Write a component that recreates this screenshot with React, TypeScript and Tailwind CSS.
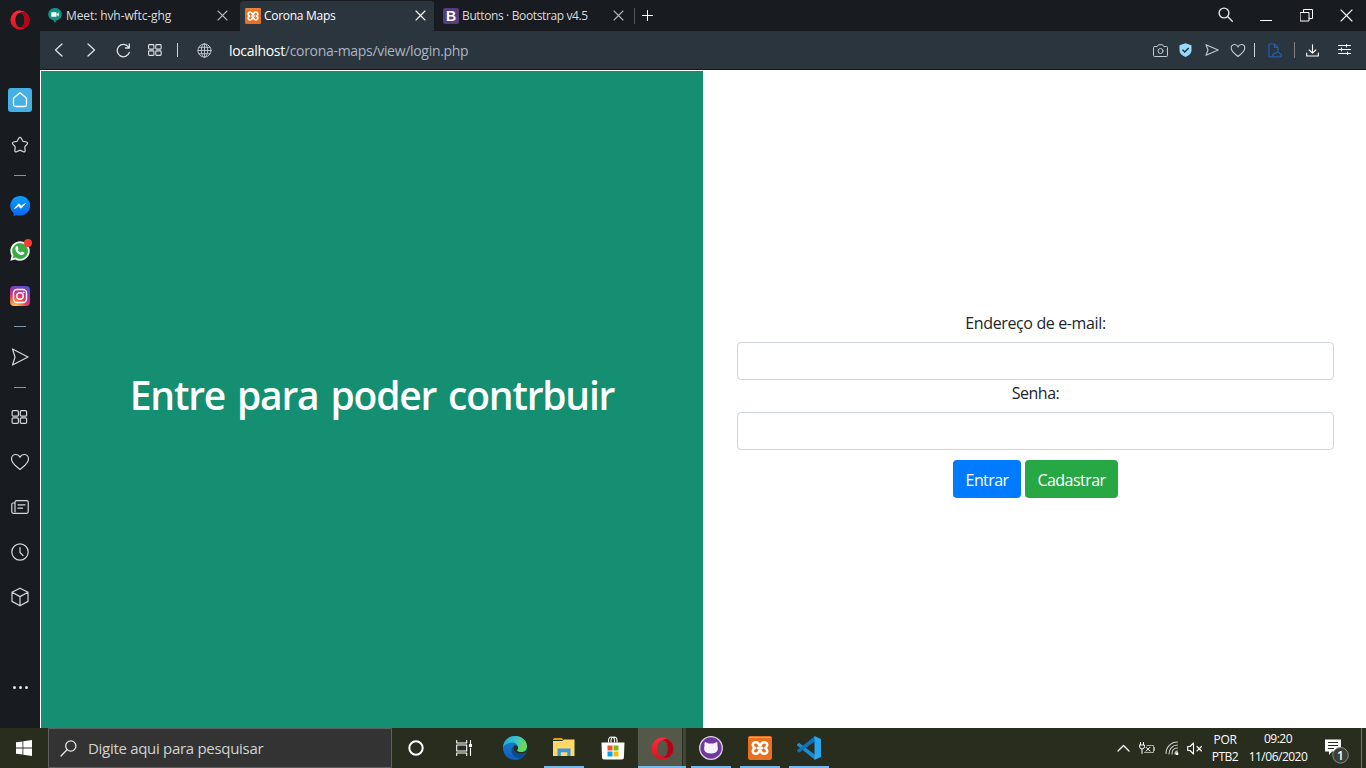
import React from "react";

type IconProps = { w: number; h: number; children: React.ReactNode; className?: string; sw?: number };

function Icon({ w, h, children, className = "text-[#d5d9dc]", sw = 1.2 }: IconProps) {
  return (
    <svg width={w} height={h} viewBox={`0 0 ${w} ${h}`} fill="none" stroke="currentColor" strokeWidth={sw} strokeLinecap="round" strokeLinejoin="round" className={`block shrink-0 ${className}`}>
      {children}
    </svg>
  );
}

function OperaMark({ size, id }: { size: number; id: string }) {
  return (
    <svg width={size} height={size} viewBox="0 0 24 24" className="block shrink-0">
      <defs>
        <linearGradient id={id} x1="0" y1="0" x2="0" y2="1">
          <stop offset="0" stopColor="#ff2a3a" />
          <stop offset="1" stopColor="#e0101f" />
        </linearGradient>
      </defs>
      <path d="M12 1.500a10.500 10.500 0 1 0 0 21a10.500 10.500 0 0 0 0-21zM12.200 4c3 0 4.800 3.600 4.800 8s-1.800 8-4.800 8s-5.200-3.600-5.200-8s2.200-8 5.200-8z" fill={`url(#${id})`} fillRule="evenodd" />
      <path d="M12.200 4c2.200-1.600 5-1.300 7.100.5a10.500 10.500 0 0 1 0 15c-2.100 1.800-4.900 2.100-7.100.5c3 0 4.800-3.600 4.800-8s-1.800-8-4.800-8z" fill="#b00518" />
    </svg>
  );
}

function Xampp({ size }: { size: number }) {
  return (
    <svg width={size} height={size} viewBox="0 0 24 24" className="block shrink-0">
      <rect width="24" height="24" rx="2" fill="#e8701f" />
      <path d="M1 1.500h22" stroke="#f6a96c" strokeWidth="1" />
      <path d="M11.200 9.300C10.800 7.300 9.600 6.200 7.800 6.200C4.600 6.200 3.400 9.800 6.800 12C3.400 14.200 4.600 17.800 7.800 17.800C9.600 17.800 10.800 16.700 11.200 14.700M12.800 14.700C13.200 16.700 14.400 17.800 16.200 17.800C19.400 17.800 20.600 14.200 17.200 12C20.600 9.800 19.400 6.200 16.200 6.200C14.400 6.200 13.200 7.300 12.800 9.300M11.200 9.300h1.600M11.200 14.700h1.600M9.800 12h4.400" fill="none" stroke="#fff" strokeWidth="2.500" strokeLinecap="round" strokeLinejoin="round" />
    </svg>
  );
}

function Slot({ children }: { children: React.ReactNode }) {
  return <div className="flex h-[45px] w-10 shrink-0 items-center justify-center">{children}</div>;
}

function LineSlot({ children }: { children: React.ReactNode }) {
  return <div className="flex h-[45px] w-10 shrink-0 items-center justify-center pr-px pb-px">{children}</div>;
}

function Dash() {
  return (
    <div className="flex h-4 shrink-0 items-center justify-center">
      <div className="h-px w-3 bg-[#8294a4]" />
    </div>
  );
}

const heart = "M10 17.500C7 15 1.500 11.500 1.500 7C1.500 4.200 3.500 2.500 5.700 2.500C7.600 2.500 9.200 3.600 10 5.300C10.800 3.600 12.400 2.500 14.300 2.500C16.500 2.500 18.500 4.200 18.500 7C18.500 11.500 13 15 10 17.500Z";

function Sidebar() {
  return (
    <aside className="flex h-[728px] w-10 shrink-0 flex-col bg-[#181b20]">
      <div className="flex h-10 shrink-0 items-center justify-center">
        <OperaMark size={22} id="opSide" />
      </div>
      <div className="h-[37.5px] shrink-0" />
      <Slot>
        <div className="flex h-6 w-6 items-center justify-center rounded-[3px] bg-[#45b0e6]">
          <Icon w={16} h={16} className="text-white" sw={1.3}>
            <path d="M1.500 7.200c0-.8.300-1.300.8-1.700L7 1.400c.6-.5 1.400-.5 2 0l4.700 4.100c.5.400.8.900.8 1.700v5.300a2 2 0 0 1-2 2h-9a2 2 0 0 1-2-2z" />
          </Icon>
        </div>
      </Slot>
      <Slot>
        <Icon w={18} h={18}>
          <path d="M7.900 2c.5-.9 1.700-.9 2.200 0l1.500 2.800c.2.300.5.500.8.600l3.100.6c1 .2 1.400 1.400.7 2.100l-2.100 2.300c-.3.300-.4.600-.3 1l.4 3.100c.1 1-.9 1.700-1.800 1.300l-2.900-1.400a1.200 1.200 0 0 0-1 0l-2.900 1.400c-.9.400-1.900-.3-1.800-1.300l.4-3.100c.1-.4-.1-.7-.3-1L1.800 8.100C1.100 7.400 1.500 6.200 2.500 6l3.100-.6c.3-.1.600-.3.800-.6z" />
        </Icon>
      </Slot>
      <Dash />
      <Slot>
        <svg width="20" height="20" viewBox="0 0 20 20">
          <defs>
            <linearGradient id="msg" x1="0" y1="0" x2="0" y2="1">
              <stop offset="0" stopColor="#0aa0f8" />
              <stop offset="1" stopColor="#0867f2" />
            </linearGradient>
          </defs>
          <path d="M10 0a10 9.800 0 1 1-3.500 18.900L3.500 20v-3A9.800 9.800 0 0 1 10 0z" fill="url(#msg)" />
          <path d="M4.500 12.500l4.300-4.700 2.600 2.200 4-2.500-4.300 4.800-2.600-2.200z" fill="#fff" stroke="#fff" strokeWidth=".8" strokeLinejoin="round" />
        </svg>
      </Slot>
      <Slot>
        <div className="relative">
          <svg width="20" height="20" viewBox="0 0 20 20" className="block">
            <path d="M.3 19.800l1.300-5A9.700 9.700 0 1 1 5.200 18.400z" fill="#f2f4f2" />
            <path d="M2.700 17.300l.8-2.900A7.900 7.900 0 1 1 5.700 16.600z" fill="#3aac45" />
            <path d="M6.300 5.200l1.100-.2 1.200 2.500-.8 1.200c.6 1.300 1.500 2.100 2.900 2.800l1.200-1.100 2.400 1.200c.1 1.500-1.100 2.500-2.400 2.500-3.100-.3-6.400-3.500-6.600-6.400 0-1.100.4-1.900 1-2.500z" fill="#fff" />
          </svg>
          <div className="absolute -top-[2px] -right-[2px] h-2 w-2 rounded-full bg-[#ff3b30]" />
        </div>
      </Slot>
      <Slot>
        <svg width="20" height="20" viewBox="0 0 20 20">
          <defs>
            <radialGradient id="ig" cx=".25" cy="1.050" r="1.100">
              <stop offset="0" stopColor="#ffd65c" />
              <stop offset=".25" stopColor="#fb8a3c" />
              <stop offset=".5" stopColor="#e4405f" />
              <stop offset=".75" stopColor="#b22fa0" />
              <stop offset="1" stopColor="#5b4fd0" />
            </radialGradient>
          </defs>
          <rect width="20" height="20" rx="4" fill="url(#ig)" />
          <rect x="3.500" y="3.500" width="13" height="13" rx="3.500" fill="none" stroke="#fff" strokeWidth="1.400" />
          <circle cx="10" cy="10" r="3.200" fill="none" stroke="#fff" strokeWidth="1.400" />
          <circle cx="13.700" cy="6.300" r=".9" fill="#fff" />
        </svg>
      </Slot>
      <Dash />
      <LineSlot>
        <Icon w={18} h={18} className="mt-px text-[#d5d9dc]">
          <path d="M1.500 1L17 9 1.500 17 4 9z" />
        </Icon>
      </LineSlot>
      <div className="-mb-[0.5px]"><Dash /></div>
      <LineSlot>
        <Icon w={17} h={14}>
          <rect x="1.100" y=".7" width="6.300" height="5.500" rx="1.200" />
          <rect x="9.300" y=".7" width="6.300" height="5.500" rx="1.200" />
          <rect x="1.100" y="7.900" width="6.300" height="5.500" rx="1.200" />
          <rect x="9.300" y="7.900" width="6.300" height="5.500" rx="1.200" />
        </Icon>
      </LineSlot>
      <LineSlot>
        <Icon w={20} h={20}><path d={heart} /></Icon>
      </LineSlot>
      <LineSlot>
        <Icon w={18} h={14}>
          <path d="M4 3H2a1.200 1.200 0 0 0-1.200 1.200v7.600A1.500 1.500 0 0 0 2.300 13.300H15.700a1.500 1.500 0 0 0 1.500-1.500V2.200A1.500 1.500 0 0 0 15.700.7H5.500A1.500 1.500 0 0 0 4 2.200v9.500M7 4.800h7M7 8.200h4.500" />
        </Icon>
      </LineSlot>
      <LineSlot>
        <Icon w={18} h={18}>
          <circle cx="9" cy="9" r="8.200" />
          <path d="M9 4.500v5l3 3" />
        </Icon>
      </LineSlot>
      <LineSlot>
        <Icon w={18} h={20}>
          <path d="M9 1.200l8 4v9.200l-8 4.400-8-4.400V5.200zM1 5.200l8 4.400 8-4.400M9 9.600v9" />
        </Icon>
      </LineSlot>
      <div className="mt-[66px] flex items-center justify-center gap-[3px]">
        <div className="h-[3px] w-[3px] rounded-full bg-[#e0e3e5]" />
        <div className="h-[3px] w-[3px] rounded-full bg-[#e0e3e5]" />
        <div className="h-[3px] w-[3px] rounded-full bg-[#e0e3e5]" />
      </div>
    </aside>
  );
}

function Close({ className }: { className: string }) {
  return (
    <Icon w={11} h={11} className={className} sw={1.1}>
      <path d="M1 1l9 9M10 1l-9 9" />
    </Icon>
  );
}

function TabBar() {
  return (
    <div className="flex h-[31px] shrink-0 bg-[#181b20] text-[12px] leading-[30px] text-[#d9dcde]">
      <div className="flex w-[200px] items-center pl-2 pr-3">
        <svg width="14" height="15" viewBox="0 0 14 15" className="shrink-0">
          <path d="M7 0a6.300 6.300 0 0 1 1.500 12.500L7 15l-1.500-2.500A6.300 6.300 0 0 1 7 0z" fill="#0f9486" />
          <rect x="3.300" y="4.200" width="5.200" height="4.600" rx=".6" fill="#fff" />
          <path d="M8.500 6.300l2.200-1.800v4L8.500 6.700z" fill="#fff" />
        </svg>
        <span className="ml-1 whitespace-nowrap tracking-[-0.1px]">Meet: hvh-wftc-ghg</span>
        <div className="ml-auto"><Close className="text-[#b0b4b8]" /></div>
      </div>
      <div className="mt-px flex w-[194px] items-center rounded-t-[3px] bg-[#2b353e] pb-px pl-[5px] pr-2 text-white">
        <Xampp size={16} />
        <span className="ml-[3px] whitespace-nowrap tracking-[-0.28px]">Corona Maps</span>
        <div className="ml-auto"><Close className="text-white" /></div>
      </div>
      <div className="flex w-[200px] items-center pl-[9px] pr-[10px]">
        <div className="flex h-4 w-4 items-center justify-center rounded-[2px] bg-[#563d7c] font-['Liberation_Sans',sans-serif] text-[14px] leading-4 font-bold text-white">B</div>
        <span className="ml-[3px] whitespace-nowrap tracking-[-0.37px]">Buttons · Bootstrap v4.5</span>
        <div className="ml-auto"><Close className="text-[#b0b4b8]" /></div>
      </div>
      <div className="flex flex-1 items-center">
        <div className="h-4 w-px bg-[#50555a]" />
        <Icon w={11} h={11} className="ml-[7px] text-white" sw={1}><path d="M5.500.500v10M.500 5.500h10" /></Icon>
        <div className="flex-1" />
        <Icon w={15} h={15} className="mr-[27px] mb-[3px] text-[#e2e4e6]" sw={1.4}><circle cx="6" cy="6" r="4.900" /><path d="M9.600 9.600l4.700 4.700" /></Icon>
        <div className="mt-[10px] mr-[28px] h-px w-3 bg-white" />
        <Icon w={13} h={13} className="mr-[27px] text-white" sw={1}><path d="M.500 3.500h8.500v8.500h-8.500zM3.500 3.500v-3h9v9h-3.500" /></Icon>
        <Icon w={13} h={13} className="mr-[13px] text-white" sw={1.1}><path d="M1 1l11 11M12 1L1 12" /></Icon>
      </div>
    </div>
  );
}

function Toolbar() {
  return (
    <div className="flex h-[39px] shrink-0 items-center border-b border-[#14171b] bg-[#2b353e]">
      <Icon w={9} h={14} className="ml-[14px] text-[#dfe2e4]" sw={1.3}><path d="M8 1L1.500 7 8 13" /></Icon>
      <Icon w={9} h={14} className="ml-6 text-[#dfe2e4]" sw={1.3}><path d="M1 1l6.500 6L1 13" /></Icon>
      <Icon w={15} h={15} className="ml-5 text-[#dfe2e4]" sw={1.3}><path d="M13.300 9.500A6.200 6.200 0 1 1 12.500 4M13.300 1v4H9.500" /></Icon>
      <Icon w={14} h={12} className="ml-[17px] text-[#dfe2e4]" sw={1.100}>
        <rect x=".6" y=".6" width="5.300" height="4.500" rx=".8" /><rect x="7.800" y=".6" width="5.300" height="4.500" rx=".8" />
        <rect x=".6" y="6.900" width="5.300" height="4.500" rx=".8" /><rect x="7.800" y="6.900" width="5.300" height="4.500" rx=".8" />
      </Icon>
      <div className="ml-[15px] h-[14px] w-px bg-[#d0d4d8]" />
      <Icon w={15} h={15} className="ml-[19px] text-[#c3cad0]" sw={0.9}>
        <circle cx="7.500" cy="7.500" r="6.600" /><ellipse cx="7.500" cy="7.500" rx="3.200" ry="6.600" /><path d="M7.500 1v13M1 7.500h13M2 4.300h11M2 10.700h11" />
      </Icon>
      <span className="ml-[17px] whitespace-nowrap pt-px text-[14px] leading-5 tracking-[-0.31px] text-[#a9b6c1]"><span className="text-white">localhost</span>/corona-maps/view/login.php</span>
      <div className="flex-1" />
      <Icon w={15} h={13} className="text-[#c3cad0]" sw={1}><path d="M1.500 2.500h2.800L5.500.700h4l1.200 1.800h2.800a1 1 0 0 1 1 1v8a1 1 0 0 1-1 1h-12a1 1 0 0 1-1-1v-8a1 1 0 0 1 1-1z" /><circle cx="7.500" cy="7" r="2.500" /></Icon>
      <svg width="13" height="14" viewBox="0 0 13 14" className="ml-[11px] shrink-0"><path d="M6.500.300l6 1.900v5.300c0 3-2.400 5-6 6.400-3.600-1.400-6-3.400-6-6.400V2.200z" fill="#98d9ff" /><path d="M3.500 6.800l2.200 2.200 4-4" fill="none" stroke="#26343f" strokeWidth="1.500" /></svg>
      <Icon w={14} h={12} className="ml-[13px] text-[#c3cad0]" sw={1.100}><path d="M1 .8L13.200 6 1 11.200 3 6z" /></Icon>
      <svg width="16" height="15" viewBox="0 1.500 20 17" className="ml-[11px] shrink-0" fill="none" stroke="#c3cad0" strokeWidth="1.400"><path d={heart} /></svg>
      <div className="ml-2 h-[14px] w-px bg-[#d0d4d8]" />
      <Icon w={14} h={15} className="ml-[13px] text-[#1f5fae]" sw={1.200}><path d="M5 13.800H1V1h5.500l3.500 3.500V8M6.500 1v3.500H10M6 13.800h6a1.500 1.500 0 0 0 0-3 2.200 2.200 0 0 0-4.200-.3A1.700 1.700 0 0 0 6 13.800z" /></Icon>
      <div className="ml-[12px] h-4 w-px bg-[#7e7d7c]" />
      <Icon w={13} h={13} className="ml-[11px] text-white" sw={1.100}><path d="M6.500.800v8M3.200 6l3.300 3.200L9.800 6M.700 9v3h11.600V9" /></Icon>
      <Icon w={13} h={11} className="ml-[19px] mr-[15px] mb-px text-white" sw={1}><path d="M.500 1.500h12M.500 5.500h12M.500 9.500h12M8.500 0v3M3.500 4v3M9.500 8v3" /></Icon>
    </div>
  );
}

function Page() {
  return (
    <main className="flex flex-1 bg-white pt-px pl-px">
      <section className="flex w-[662px] items-center justify-center bg-[#148f72]">
        <h1 className="mb-[10px] whitespace-nowrap text-[39px] leading-[48px] font-semibold tracking-[-1.2px] [word-spacing:3px] text-white">Entre para poder contrbuir</h1>
      </section>
      <form className="flex flex-1 flex-col pt-[239px] pr-8 pl-[34px] text-center text-[16px] leading-6 text-[#212529]">
        <label className="block h-8 pt-px tracking-[-0.37px]">Endereço de e-mail:</label>
        <input className="block h-[38px] w-full rounded-[4px] border border-[#ced4da] px-3 outline-none" />
        <label className="block h-8 pt-px tracking-[-0.5px]">Senha:</label>
        <input className="block h-[38px] w-full rounded-[4px] border border-[#ced4da] px-3 outline-none" />
        <div className="mt-[10px] flex justify-center gap-1 text-white">
          <button type="button" className="flex h-[38px] w-[68px] items-center justify-center rounded-[4px] bg-[#007bff] pt-px tracking-[-0.6px]">Entrar</button>
          <button type="button" className="flex h-[38px] w-[93px] items-center justify-center rounded-[4px] bg-[#28a745] pt-px tracking-[-0.55px]">Cadastrar</button>
        </div>
      </form>
    </main>
  );
}

function Task({ children, open, active }: { children: React.ReactNode; open?: boolean; active?: boolean }) {
  return (
    <div className={active ? "flex h-10 w-[49px] flex-col pl-px" : "flex h-10 w-[49px] flex-col pl-[5px] pr-1"}>
      <div className={active ? "flex w-full flex-1" : "flex w-full flex-1 items-center justify-center pt-[2px]"}>
        {active ? (
          <>
            <div className="flex w-[44px] items-center justify-center bg-[#535849] pt-[2px] pl-1">{children}</div>
            <div className="ml-px w-[3px] bg-[#40453a]" />
          </>
        ) : children}
      </div>
      <div className={open ? "h-[2px] w-full bg-[#76b9ed]" : "h-[2px] w-full"} />
    </div>
  );
}

function Taskbar() {
  return (
    <footer className="flex h-10 bg-[#282d1e] text-white">
      <div className="flex w-12 items-center justify-center">
        <svg width="16" height="16" viewBox="0 0 16 16" fill="#fff"><path d="M0 2.300L6.500 1.400V7.600H0zM7.300 1.300L16 0v7.600H7.300zM0 8.400h6.500v6.200L0 13.700zM7.300 8.400H16V16l-8.700-1.300z" /></svg>
      </div>
      <div className="flex w-[344px] items-center border border-[#5f605d] bg-[#333333] pl-[11px]">
        <Icon w={17} h={17} className="text-[#e6e6e6]" sw={1.3}><circle cx="10.800" cy="6" r="5.100" /><path d="M7 9.700L1 16" /></Icon>
        <span className="ml-[11px] whitespace-nowrap text-[15px] leading-5 tracking-[-0.3px] text-[#d2d2d2]">Digite aqui para pesquisar</span>
      </div>
      <div className="flex w-12 items-center justify-center"><Icon w={16} h={16} className="text-white" sw={2}><circle cx="8" cy="8" r="6.700" /></Icon></div>
      <div className="mr-[2px] flex w-12 items-center justify-center">
        <Icon w={16} h={16} className="text-white" sw={1.100}><path d="M.700.500V3h10V.500M.700 15.500V13h10v2.500M.700 5h10v6H.700zM14.500.500v3M14.500 8v7.500" /><path d="M13.500 4.500h2v2h-2z" fill="currentColor" /></Icon>
      </div>
      <Task>
        <svg width="24" height="24" viewBox="0 0 24 24">
          <defs>
            <linearGradient id="eg1" x1="0" y1="0" x2="1" y2=".3"><stop offset="0" stopColor="#1ba5e0" /><stop offset=".5" stopColor="#35c1d0" /><stop offset="1" stopColor="#6bdc55" /></linearGradient>
            <linearGradient id="eg2" x1="0" y1="0" x2="0" y2="1"><stop offset="0" stopColor="#1785d6" /><stop offset="1" stopColor="#0d5eb5" /></linearGradient>
          </defs>
          <circle cx="12" cy="12" r="12" fill="url(#eg2)" />
          <path d="M0 11.500C.6 4.500 5.800 0 12 0c7 0 12 5 12 10 0 4-3 6-6 6-2.500 0-4-.8-4-1.800 0-.8 1-1.200 1-2.800C15 8.500 12.400 6.500 9 6.500 5 6.500 1.300 8.500 0 11.500z" fill="url(#eg1)" />
          <path d="M8.500 15c0-3 1.400-4.800 3.300-5.800 2 .6 3.200 1.200 3.200 2.300 0 1.300-1 1.700-1 2.700 0 2 2.600 3.300 5.500 3.300 1.500 0 2.500-.4 3.300-.7-1.200 2.400-3 4.300-5.300 5.300-5 .5-9-3-9-7.100z" fill="#104a8c" />
          <path d="M11.800 9.500c-1 .8-1 2.200-.8 3.500.4 2.500 3 4.600 6.500 4.600 2.500 0 4.200-.5 5.500-1.200l.8-2.200c-1.500 1.300-3.500 1.800-5.800 1.800-2.500 0-4-.8-4-1.800 0-.8 1-1.200 1-2.800 0-1.300-1.800-2.200-3.200-1.900z" fill="#282d1e" />
        </svg>
      </Task>
      <Task open>
        <svg width="22" height="20" viewBox="0 0 22 20">
          <path d="M0 1.500A1.500 1.500 0 0 1 1.500 0H9l1.500 2H0z" fill="#e29d0b" />
          <path d="M0 3h9l2-1.500h10.500V18H0z" fill="#ffd869" />
          <path d="M4.500 18v-7.500h13V18h-3.200v-3.800H7.800V18z" fill="#3a96dd" />
        </svg>
      </Task>
      <Task>
        <svg width="24" height="24" viewBox="0 0 24 24">
          <path d="M7.500 6.500V4.500c0-2 1-3.500 3-3.500s3 1.500 3 3.500v2M10 6.500V4.500c0-2 1-3.500 3-3.500s3 1.500 3 3.500v2" fill="none" stroke="#fff" strokeWidth="1.100" />
          <path d="M.5 6.500h23l-.6 15a2 2 0 0 1-2 2H3a2 2 0 0 1-2-2z" fill="#fff" />
          <path d="M6.500 9.500h5v5h-5z" fill="#f25022" /><path d="M12.500 9.500h5v5h-5z" fill="#7fba00" /><path d="M6.500 15.500h5v5h-5z" fill="#00a4ef" /><path d="M12.500 15.500h5v5h-5z" fill="#ffb900" />
        </svg>
      </Task>
      <Task open active><OperaMark size={25} id="opTask" /></Task>
      <Task open>
        <svg width="24" height="24" viewBox="0 0 24 24">
          <circle cx="12" cy="12" r="11.300" fill="#6f3a9e" stroke="#d9d3e0" strokeWidth="1.300" />
          <path d="M5.800 6.300c1.500 0 2.600.6 3.500 1.300h5.400c.9-.7 2-1.300 3.500-1.300.5 1.200.5 2.300.2 3.300 1.200 3.800.5 7.900-6.400 7.900S4.400 13.400 5.600 9.600c-.3-1-.3-2.100.2-3.300z" fill="#f4f1f7" />
        </svg>
      </Task>
      <Task open><Xampp size={24} /></Task>
      <Task open>
        <svg width="24" height="24" viewBox="0 0 24 24">
          <path d="M0 8.200L2 6.800l16 12v5L0 9.500z" fill="#1b8bd6" />
          <path d="M0 15L2 16.800 18 5.300V0L0 14.200z" fill="#0f73b9" />
          <path d="M17.500 0L24 3v18l-6.500 3z" fill="#2aa6ef" />
        </svg>
      </Task>
      <div className="flex-1" />
      <div className="flex items-center">
        <Icon w={13} h={8} className="mr-[9px] text-white" sw={1.300}><path d="M1 7l5.500-5.500L12 7" /></Icon>
        <Icon w={16} h={13} className="mr-[10px] text-white" sw={1}><path d="M1.500.500v2M4.500.500v2M.500 3h5v1.500a2.500 2.500 0 0 1-5 0zM3 7.500v4" /><path d="M8 3.500h6.500v7H5.500M15.500 5.500v3" className="text-[#a9aca3]" stroke="currentColor" /><path d="M7 5.200l4 4M11 5.200L7 9.200" /></Icon>
        <Icon w={14} h={14} className="mr-[8px] text-[#d0d2cc]" sw={1.100}><path d="M1 12.500C1 6 6 1 12.500 1M4 13c0-5 3.500-9 8.500-9M7 13c0-3.500 2-6 5.500-6M10 13c0-1.800 1-3 2.500-3" /><circle cx="12" cy="12.700" r=".9" fill="#fff" stroke="#fff" /></Icon>
        <Icon w={16} h={13} className="mr-[8px] text-white" sw={1.100}><path d="M.700 4.500h2.300L6.500 1v11L3 8.500H.700zM10 4.500l4.500 4.500M14.500 4.500L10 9" /></Icon>
        <div className="flex w-[28px] flex-col items-center text-[12px] leading-[17px]"><span className="tracking-[-0.3px]">POR</span><span className="tracking-[-0.5px]">PTB2</span></div>
        <div className="ml-[9px] flex w-[60px] flex-col items-center text-[12px] leading-[17px] tracking-[-0.5px]"><span className="-mt-px mb-px">09:20</span><span>11/06/2020</span></div>
        <div className="relative ml-[17px] h-[22px] w-[24px]">
          <svg width="24" height="27" viewBox="0 0 24 27" className="block">
            <path d="M0 2.500h16v12H7l-3 3.500v-3.500H0z" fill="#fff" />
            <path d="M3 5.500h10M3 8.500h10M3 11.500h6" stroke="#282d1e" strokeWidth="1" />
            <circle cx="15.500" cy="18.300" r="7.800" fill="#3b3f36" stroke="#8b8e87" strokeWidth="1" />
          </svg>
          <span className="absolute top-[12px] left-[8px] w-[15px] text-center text-[12px] leading-[13px] font-semibold text-white">1</span>
        </div>
        <div className="ml-[12px] h-10 w-px bg-[#74776f]" />
        <div className="w-1" />
      </div>
    </footer>
  );
}

export default function App() {
  return (
    <div className="flex h-[768px] w-[1366px] flex-col overflow-hidden font-['Open_Sans','Noto_Sans',sans-serif]">
      <div className="flex h-[728px]">
        <Sidebar />
        <div className="flex flex-1 flex-col">
          <TabBar />
          <Toolbar />
          <Page />
        </div>
      </div>
      <Taskbar />
    </div>
  );
}
